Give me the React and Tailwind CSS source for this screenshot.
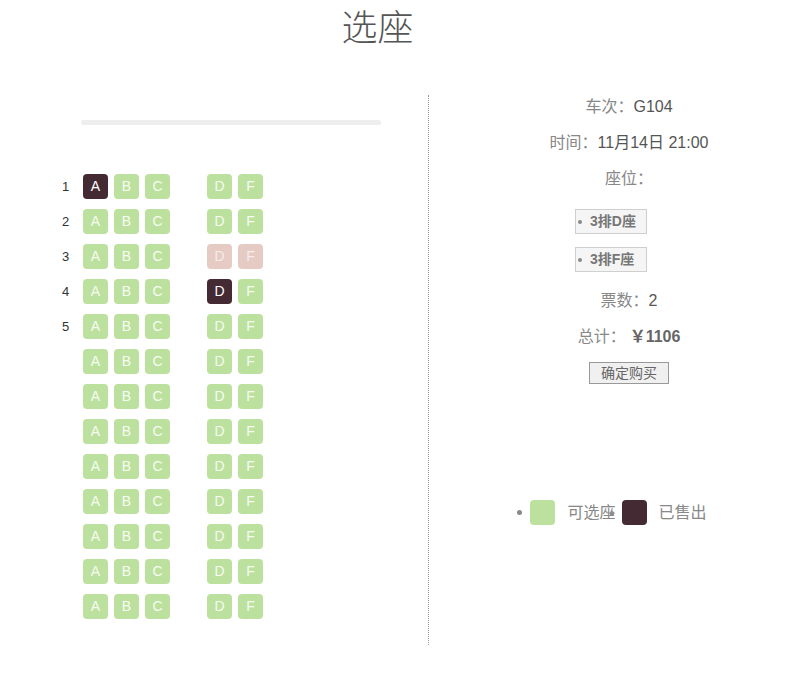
import React from "react";

const font = { fontFamily: '"Liberation Sans", "Noto Sans CJK SC", sans-serif' };

const rows = 13;
const cols = ["A", "B", "C", null, "D", "F"];

function seatState(r, c) {
  if (r === 0 && c === "A") return "sold";
  if (r === 3 && c === "D") return "sold";
  if (r === 2 && (c === "D" || c === "F")) return "picked";
  return "free";
}

function Seat({ state, label }) {
  const cls =
    state === "sold"
      ? "bg-[#432a33] text-white"
      : state === "picked"
      ? "bg-[#e6cbc4] text-[#f6ecea]"
      : "bg-[#bce19f] text-[#f6fbf2]";
  return (
    <div className={`w-[25px] h-[25px] rounded-[4px] flex items-center justify-center text-[14px] ${cls}`}>
      {label}
    </div>
  );
}

export default function App() {
  return (
    <div className="w-[789px] h-[689px] bg-white overflow-hidden" style={font}>
      <div className="h-[56px] flex justify-center pr-[34px]">
        <div className="text-[36px] leading-[58px] text-[#555] font-light">选座</div>
      </div>
      <div className="mt-[39px] flex">
        <div className="w-[429px] border-r border-dotted border-[#999] pt-[25px] pb-[26px]">
          <div className="ml-[81px] w-[300px] h-[5px] rounded-full bg-[#eeeeee]"></div>
          <div className="mt-[49px] pl-[61px] flex flex-col gap-[10px]">
            {Array.from({ length: rows }).map((_, r) => (
              <div key={r} className="flex items-center">
                <div className="w-[22px] pl-[1px] text-[13px] text-[#333]">{r < 5 ? r + 1 : ""}</div>
                <div className="flex gap-[6px]">
                  {cols.map((c, i) =>
                    c ? (
                      <Seat key={i} label={c} state={seatState(r, c)} />
                    ) : (
                      <div key={i} className="w-[25px] h-[25px]"></div>
                    )
                  )}
                </div>
              </div>
            ))}
          </div>
        </div>
        <div className="flex-1 pl-[40px] flex flex-col items-center text-[16px]">
          <div className="leading-[24px] text-[#888]">
            车次：<span className="text-[#555]">G104</span>
          </div>
          <div className="mt-[12px] leading-[24px] text-[#888]">
            时间：<span className="text-[#555]">11月14日 21:00</span>
          </div>
          <div className="mt-[12px] leading-[24px] text-[#888]">座位：</div>
          <div className="mt-[18px] mr-[36px] flex flex-col gap-[13px]">
            {["3排D座", "3排F座"].map((t) => (
              <div
                key={t}
                className="w-[72px] h-[25px] border border-[#cfcfcf] bg-[#f5f5f5] flex items-center text-[14px] font-bold text-[#777]"
              >
                <span className="ml-[2px] mr-[8px] w-[4px] h-[4px] rounded-full bg-[#888]"></span>
                {t}
              </div>
            ))}
          </div>
          <div className="mt-[17px] leading-[24px] text-[#888]">
            票数：<span className="text-[#555]">2</span>
          </div>
          <div className="mt-[12px] leading-[24px] text-[#888]">
            总计：<span className="ml-[4px] text-[#666] font-bold">￥1106</span>
          </div>
          <button className="mt-[13px] w-[80px] h-[22px] border border-[#999] bg-[#f0f0f0] text-[14px] text-[#666] leading-[20px]">
            确定购买
          </button>
          <div className="mt-[116px] mr-[34px] flex items-center text-[16px] text-[#888]">
            <span className="w-[5px] h-[5px] rounded-full bg-[#888] mr-[8px]"></span>
            <span className="w-[25px] h-[25px] rounded-[4px] bg-[#bce19f]"></span>
            <span className="ml-[12px] relative">
              可选座
              <span className="absolute right-[2px] top-[11px] w-[4px] h-[4px] rounded-full bg-[#888]"></span>
            </span>
            <span className="ml-[6px] w-[25px] h-[25px] rounded-[4px] bg-[#432a33]"></span>
            <span className="ml-[12px]">已售出</span>
          </div>
        </div>
      </div>
    </div>
  );
}
